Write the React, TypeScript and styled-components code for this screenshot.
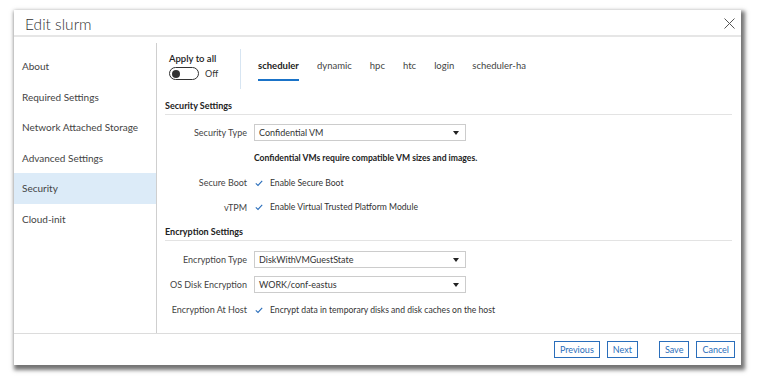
import React, { useState } from "react";
import styled, { createGlobalStyle } from "styled-components";

const GlobalStyle = createGlobalStyle`
  body {
    margin: 0;
    background: #fff;
    font-family: "Lato", "Open Sans", sans-serif;
    color: #333;
  }
`;

const Page = styled.div`
  width: 758px;
  height: 376px;
  padding: 10px 0 0 14px;
  box-sizing: border-box;
`;

const Dialog = styled.div`
  width: 727px;
  height: 355px;
  background: #fff;
  box-shadow: 2px 3px 4px 2px rgba(0, 0, 0, 0.55);
  display: flex;
  flex-direction: column;
`;

const Header = styled.div`
  height: 25px;
  border-bottom: 2px solid #e6e6e6;
  display: flex;
  align-items: center;
  justify-content: space-between;
  padding: 0 6px 0 11px;
`;

const Title = styled.div`
  font-size: 15.5px;
  font-weight: 300;
  color: #333;
  padding-top: 2px;
`;

const CloseButton = styled.div`
  width: 11px;
  height: 11px;
  display: flex;
  margin-top: 2px;
`;

const Body = styled.div`
  flex: 1;
  display: flex;
  padding-top: 6px;
  border-bottom: 1px solid #dcdcdc;
`;

const Sidebar = styled.div`
  width: 142px;
  border-right: 1px solid #cfcfcf;
  padding-top: 8px;
`;

const NavItem = styled.div<{ $active?: boolean }>`
  height: 30.5px;
  display: flex;
  align-items: center;
  padding-left: 8px;
  font-size: 10px;
  color: #444;
  background: ${(p) => (p.$active ? "#dcebf8" : "transparent")};
`;

const Main = styled.div`
  flex: 1;
  padding: 6px 9px 0 8px;
  font-size: 9px;
  color: #333;
`;

const TopRow = styled.div`
  display: flex;
  height: 40px;
  align-items: stretch;
`;

const ApplyBlock = styled.div`
  width: 71px;
  padding: 4px 0 0 4px;
  border-right: 1px solid #d7e5f2;
`;

const ApplyLabel = styled.div`
  font-size: 9.5px;
  font-weight: 600;
  color: #222;
`;

const ToggleRow = styled.div`
  display: flex;
  align-items: center;
  gap: 6px;
  margin-top: 3px;
`;

const Toggle = styled.div`
  width: 26px;
  height: 11px;
  border: 1px solid #333;
  border-radius: 7px;
  display: flex;
  align-items: center;
  padding-left: 2px;
`;

const Knob = styled.div`
  width: 8px;
  height: 8px;
  border-radius: 50%;
  background: #333;
`;

const Tabs = styled.div`
  display: flex;
  padding-left: 17px;
  gap: 18px;
`;

const Tab = styled.div<{ $active?: boolean }>`
  padding-top: 11px;
  font-size: 9.5px;
  font-weight: ${(p) => (p.$active ? 700 : 400)};
  color: ${(p) => (p.$active ? "#222" : "#444")};
  height: 32px;
  box-sizing: border-box;
  border-bottom: 2px solid ${(p) => (p.$active ? "#1a73c8" : "transparent")};
`;

const SectionHeading = styled.div<{ $top: number }>`
  margin-top: ${(p) => p.$top}px;
  padding-bottom: 3px;
  border-bottom: 1px solid #e3e3e3;
  font-weight: 700;
  font-size: 9px;
  color: #222;
`;

const FieldRow = styled.div<{ $h?: number; $top?: number }>`
  display: flex;
  align-items: center;
  height: ${(p) => p.$h ?? 25}px;
  margin-top: ${(p) => p.$top ?? 0}px;
`;

const Label = styled.div`
  width: 82px;
  text-align: right;
  padding-right: 7px;
  color: #444;
  white-space: nowrap;
`;

const Select = styled.div`
  width: 212px;
  height: 17px;
  box-sizing: border-box;
  border: 1px solid #ccc;
  display: flex;
  align-items: center;
  justify-content: space-between;
  padding: 0 6px 0 4px;
  color: #333;
`;

const Caret = styled.div`
  width: 0;
  height: 0;
  border-left: 3.5px solid transparent;
  border-right: 3.5px solid transparent;
  border-top: 4px solid #222;
`;

const Note = styled.div`
  font-weight: 700;
  font-size: 8.6px;
  color: #222;
`;

const Check = styled.label`
  display: flex;
  align-items: center;
  gap: 6px;
  font-size: 8.6px;
  color: #333;
`;

const Footer = styled.div`
  height: 31px;
  display: flex;
  align-items: center;
  justify-content: flex-end;
  padding-right: 6px;
`;

const Button = styled.button<{ $gap?: number }>`
  height: 17px;
  padding: 0 5px;
  margin-left: ${(p) => p.$gap ?? 7}px;
  background: #fff;
  border: 1px solid #2a6ebb;
  color: #2a6ebb;
  font-family: "Lato", "Open Sans", sans-serif;
  font-size: 9px;
  cursor: pointer;
`;

const CheckMark = () => (
  <svg width="10" height="10" viewBox="0 0 10 10">
    <path d="M1.8 5.4 L4 7.4 L8.2 2.8" fill="none" stroke="#2a6ebb" strokeWidth="1.1" />
  </svg>
);

const navItems = [
  "About",
  "Required Settings",
  "Network Attached Storage",
  "Advanced Settings",
  "Security",
  "Cloud-init",
];

const tabs = ["scheduler", "dynamic", "hpc", "htc", "login", "scheduler-ha"];

export default function App() {
  const [active, setActive] = useState("Security");
  const [tab, setTab] = useState("scheduler");

  return (
    <Page>
      <GlobalStyle />
      <Dialog>
        <Header>
          <Title>Edit slurm</Title>
          <CloseButton>
            <svg width="11" height="11" viewBox="0 0 11 11">
              <path d="M0.5 0.5 L10.5 10.5 M10.5 0.5 L0.5 10.5" stroke="#555" strokeWidth="1" />
            </svg>
          </CloseButton>
        </Header>
        <Body>
          <Sidebar>
            {navItems.map((n) => (
              <NavItem key={n} $active={n === active} onClick={() => setActive(n)}>
                {n}
              </NavItem>
            ))}
          </Sidebar>
          <Main>
            <TopRow>
              <ApplyBlock>
                <ApplyLabel>Apply to all</ApplyLabel>
                <ToggleRow>
                  <Toggle>
                    <Knob />
                  </Toggle>
                  <span>Off</span>
                </ToggleRow>
              </ApplyBlock>
              <Tabs>
                {tabs.map((t) => (
                  <Tab key={t} $active={t === tab} onClick={() => setTab(t)}>
                    {t}
                  </Tab>
                ))}
              </Tabs>
            </TopRow>

            <SectionHeading $top={11}>Security Settings</SectionHeading>
            <FieldRow $top={5}>
              <Label>Security Type</Label>
              <Select>
                <span>Confidential VM</span>
                <Caret />
              </Select>
            </FieldRow>
            <FieldRow $h={25}>
              <Label />
              <Note>Confidential VMs require compatible VM sizes and images.</Note>
            </FieldRow>
            <FieldRow $h={25}>
              <Label>Secure Boot</Label>
              <Check>
                <CheckMark />
                Enable Secure Boot
              </Check>
            </FieldRow>
            <FieldRow $h={24}>
              <Label>vTPM</Label>
              <Check>
                <CheckMark />
                Enable Virtual Trusted Platform Module
              </Check>
            </FieldRow>

            <SectionHeading $top={7}>Encryption Settings</SectionHeading>
            <FieldRow $top={6}>
              <Label>Encryption Type</Label>
              <Select>
                <span>DiskWithVMGuestState</span>
                <Caret />
              </Select>
            </FieldRow>
            <FieldRow>
              <Label>OS Disk Encryption</Label>
              <Select>
                <span>WORK/conf-eastus</span>
                <Caret />
              </Select>
            </FieldRow>
            <FieldRow>
              <Label>Encryption At Host</Label>
              <Check>
                <CheckMark />
                Encrypt data in temporary disks and disk caches on the host
              </Check>
            </FieldRow>
          </Main>
        </Body>
        <Footer>
          <Button>Previous</Button>
          <Button>Next</Button>
          <Button $gap={21}>Save</Button>
          <Button>Cancel</Button>
        </Footer>
      </Dialog>
    </Page>
  );
}
